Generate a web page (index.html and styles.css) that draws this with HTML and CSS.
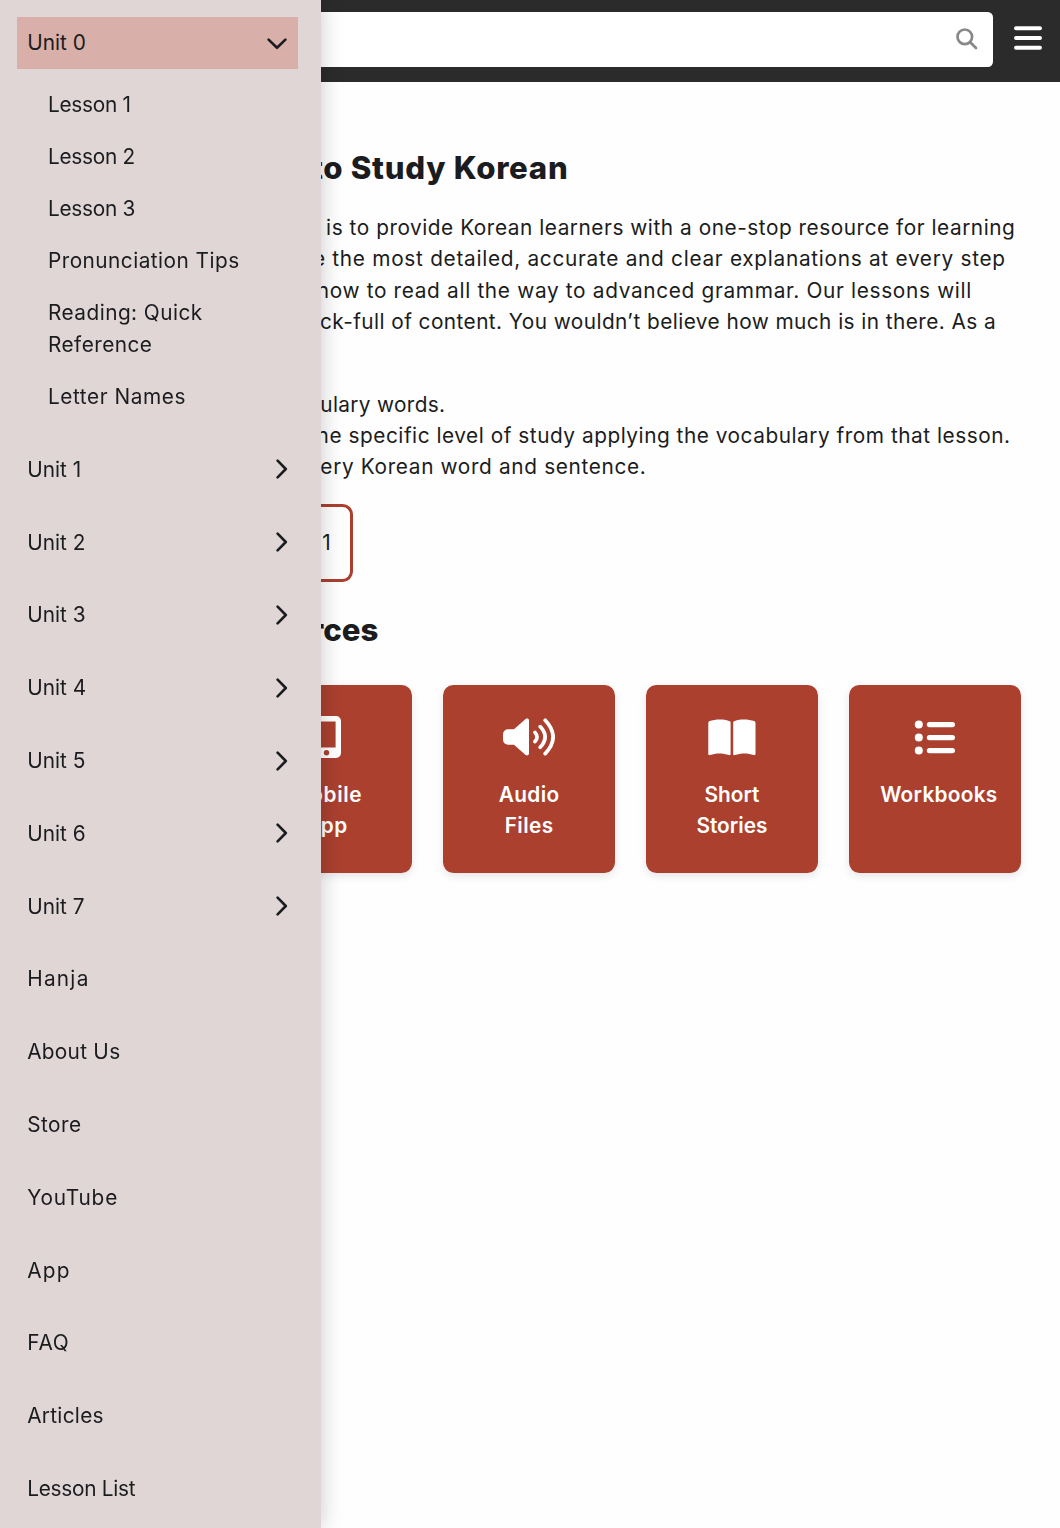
FILE: index.html
```html
<!DOCTYPE html>
<html lang="en">
<head>
<meta charset="utf-8">
<title>How to Study Korean</title>
<link rel="stylesheet" href="styles.css">
</head>
<body>
<header class="topbar">
  <div class="search">
    <svg class="search-icon" viewBox="0 0 22 22"><circle cx="8.8" cy="8.8" r="7.3"/><path d="M14.2 14.2 20 20"/></svg>
  </div>
  <svg class="burger" viewBox="0 0 28 26"><path d="M2 3.2H26M2 13H26M2 22.8H26"/></svg>
</header>

<main class="content">
  <h1 class="title title-main">Welcome to How to Study Korean</h1>
  <p class="text">
    <span class="line p1">Our goal here is to provide Korean learners with a one-stop resource for learning</span>
    <span class="line p2">Korean. We provide the most detailed, accurate and clear explanations at every step</span>
    <span class="line p3">from learning how to read all the way to advanced grammar. Our lessons will</span>
    <span class="line p4">be chock-full of content. You wouldn’t believe how much is in there. As a</span>
  </p>
  <div class="text list">
    <span class="line l1">Over 8,000 vocabulary words.</span>
    <span class="line l2">Sentences at the specific level of study applying the vocabulary from that lesson.</span>
    <span class="line l3">Audio for every Korean word and sentence.</span>
  </div>
  <a class="start">Start with Unit 1, Lesson 1</a>
  <h2 class="title title-sub">Resources</h2>
  <div class="cards">
    <a class="card"><span class="card-icon"><svg width="42" height="42" viewBox="0 0 42 42"><rect x="3" y="3" width="36" height="36" rx="3" fill="#fff"/></svg></span><span>Lessons</span></a>
    <a class="card"><span class="card-icon"><svg width="29" height="42" viewBox="0 0 29 42"><path fill="#fff" fill-rule="evenodd" d="M5 0H24A5 5 0 0 1 29 5V37A5 5 0 0 1 24 42H5A5 5 0 0 1 0 37V5A5 5 0 0 1 5 0ZM5.4 5.6V31.4H23.6V5.6ZM14.5 34A2.7 2.7 0 1 0 14.5 39.4A2.7 2.7 0 1 0 14.5 34Z"/></svg></span><span class="ls-mob">Mobile App</span></a>
    <a class="card"><span class="card-icon"><svg width="52" height="38" viewBox="0 0 52 38"><path fill="#fff" d="M5 11.2H11L22.6 1C24 .1 26 .6 26 2.4V35.6C26 37.4 24 37.9 22.6 37L11 26.7H5A5 5 0 0 1 0 21.7V16.2A5 5 0 0 1 5 11.2Z"/><path d="M32 14.4Q36 19 32 23.5M37.2 8.6Q47 19 37.2 29.2M42.2 2.3Q58 19 42.2 35.6" fill="none" stroke="#fff" stroke-width="3.7" stroke-linecap="round"/></svg></span><span class="ls-aud">Audio Files</span></a>
    <a class="card"><span class="card-icon"><svg width="48" height="37" viewBox="0 0 48 37"><path fill="#fff" d="M22.6 3.3V35C22.6 36.2 22 36.4 21 36C15 34 8 33.8 2 36C.9 36.4.3 36 .3 35V4Q.3 2.7 1.5 2.1C7 .1 15-.3 21 1.9Q22.6 2.4 22.6 3.3ZM25.2 3.3V35C25.2 36.2 25.8 36.4 26.8 36C32.8 34 39.8 33.8 45.8 36C46.9 36.4 47.5 36 47.5 35V4Q47.5 2.7 46.3 2.1C40.8.1 32.8-.3 26.8 1.9Q25.2 2.4 25.2 3.3Z"/></svg></span><span>Short Stories</span></a>
    <a class="card"><span class="card-icon"><svg width="41" height="35" viewBox="-.6 -.2 41 35"><g fill="#fff"><circle cx="4.2" cy="4.4" r="4"/><circle cx="4.2" cy="17.4" r="4"/><circle cx="4.2" cy="30.4" r="4"/></g><path d="M14.8 4.4H37.8M14.8 17.4H37.8M14.8 30.4H37.8" stroke="#fff" stroke-width="5.2" stroke-linecap="round"/></svg></span><span class="ls-wrk">Workbooks</span></a>
  </div>
</main>

<nav class="sidebar">
  <div class="unit active">Unit 0<svg class="chev-down" viewBox="0 0 20 12"><path d="M1.6 1.6 10 9.8 18.4 1.6"/></svg></div>
  <div class="lessons">
    <a class="lesson t0">Lesson 1</a>
    <a class="lesson t0">Lesson 2</a>
    <a class="lesson t0">Lesson 3</a>
    <a class="lesson t2">Pronunciation Tips</a>
    <a class="lesson t2">Reading: Quick Reference</a>
    <a class="lesson t3">Letter Names</a>
  </div>
  <div class="unit">Unit 1<svg class="chev" viewBox="0 0 12 20"><path d="M1.6 1.6 9.8 10 1.6 18.4"/></svg></div>
  <div class="unit">Unit 2<svg class="chev" viewBox="0 0 12 20"><path d="M1.6 1.6 9.8 10 1.6 18.4"/></svg></div>
  <div class="unit">Unit 3<svg class="chev" viewBox="0 0 12 20"><path d="M1.6 1.6 9.8 10 1.6 18.4"/></svg></div>
  <div class="unit">Unit 4<svg class="chev" viewBox="0 0 12 20"><path d="M1.6 1.6 9.8 10 1.6 18.4"/></svg></div>
  <div class="unit">Unit 5<svg class="chev" viewBox="0 0 12 20"><path d="M1.6 1.6 9.8 10 1.6 18.4"/></svg></div>
  <div class="unit">Unit 6<svg class="chev" viewBox="0 0 12 20"><path d="M1.6 1.6 9.8 10 1.6 18.4"/></svg></div>
  <div class="unit">Unit 7<svg class="chev" viewBox="0 0 12 20"><path d="M1.6 1.6 9.8 10 1.6 18.4"/></svg></div>
  <a class="unit t5">Hanja</a>
  <a class="unit t1">About Us</a>
  <a class="unit t2">Store</a>
  <a class="unit t4">YouTube</a>
  <a class="unit t5">App</a>
  <a class="unit t4">FAQ</a>
  <a class="unit t1">Articles</a>
  <a class="unit t0">Lesson List</a>
</nav>
</body>
</html>
```
FILE: styles.css
```css
* { box-sizing: border-box; }

html, body { height: 100%; }

body {
  margin: 0;
  overflow: hidden;
  background: #fefefe;
  color: #1b1c20;
  font: 400 20.8px/31.2px Inter, "Open Sans", sans-serif;
}

.topbar {
  display: flex;
  align-items: center;
  gap: 21px;
  height: 82.4px;
  padding: 0 18.4px 3.6px 40px;
  background: #2b2b2b;
}

.search {
  display: flex;
  flex: 1;
  align-items: center;
  justify-content: flex-end;
  height: 55.4px;
  padding-right: 15px;
  border-radius: 5.2px;
  background: #fff;
}

.search-icon {
  width: 22px;
  height: 22px;
  fill: none;
  stroke: #888;
  stroke-width: 2.7;
  stroke-linecap: round;
}

.burger {
  width: 28px;
  height: 26px;
  margin-top: -2px;
  stroke: #fff;
  stroke-width: 4;
  stroke-linecap: round;
}

.content { padding: 66px 39.6px 0 37.8px; }

.title {
  display: flex;
  justify-content: flex-end;
  margin: 0;
  font-size: 31.2px;
  font-weight: 800;
  line-height: 41.6px;
  white-space: nowrap;
}

.title-main { padding-right: 452px; letter-spacing: .7px; }
.title-sub { margin-top: 28px; padding-right: 642px; }

.text { margin: 22.3px 0 0; }
.list { margin-top: 51.8px; }

.line {
  display: flex;
  justify-content: flex-end;
  white-space: nowrap;
}

.p1 { padding-right: 5px; letter-spacing: .54px; }
.p2 { padding-right: 14.6px; letter-spacing: .71px; }
.p3 { padding-right: 48.4px; letter-spacing: .68px; }
.p4 { padding-right: 24.3px; letter-spacing: .435px; }
.l1 { padding-right: 575px; letter-spacing: .338px; }
.l2 { padding-right: 9.8px; letter-spacing: .53px; }
.l3 { padding-right: 374px; letter-spacing: .65px; }

.start {
  display: flex;
  align-items: center;
  justify-content: flex-end;
  width: 315.4px;
  height: 78px;
  margin-top: 21px;
  padding-right: 19.4px;
  border: 3px solid #ab402f;
  border-radius: 10.4px;
  white-space: nowrap;
}

.cards {
  display: grid;
  grid-template-columns: repeat(5, 171.6px);
  gap: 31.2px;
  margin-top: 34.3px;
}

.card {
  display: flex;
  flex-direction: column;
  align-items: center;
  gap: 20.8px;
  height: 187.2px;
  padding: 31.2px;
  border-radius: 10.4px;
  background: #ab402f;
  box-shadow: 0 3px 8px rgba(0, 0, 0, .1);
  color: #fff;
  font-weight: 600;
  text-align: center;
}

.card > span:last-child { width: 109.2px; }

.card-icon {
  display: flex;
  align-items: center;
  justify-content: center;
  height: 41.6px;
}

.ls-mob { letter-spacing: .6px; }
.ls-aud { letter-spacing: .4px; }
.ls-wrk { letter-spacing: .28px; }

/* Slide-out menu, drawn over the page */
.sidebar {
  position: fixed;
  top: 0;
  bottom: 0;
  left: 0;
  display: flex;
  flex-direction: column;
  gap: 20.8px;
  width: 321px;
  padding: 16.8px 23.4px 0 16.8px;
  background: #e0d6d5;
  box-shadow: 0 0 21px rgba(0, 0, 0, .21);
}

.unit {
  display: flex;
  flex: none;
  align-items: center;
  justify-content: space-between;
  height: 52px;
  padding: 0 10.4px;
}

.active { background: #d8b0a9; }

.lessons {
  display: flex;
  flex-direction: column;
  margin-top: -11px;
}

.lesson { padding: 10.3px 35px 10.3px 31.2px; line-height: 31.5px; }

.chev, .chev-down {
  fill: none;
  stroke: #1b1c20;
  stroke-width: 2.6;
  stroke-linecap: round;
  stroke-linejoin: round;
}

.chev { width: 12px; height: 20px; margin-right: -1px; }
.chev-down { width: 20px; height: 12px; margin-top: 3px; }

.t0 { letter-spacing: -.26px; }
.t1 { letter-spacing: .28px; }
.t2 { letter-spacing: .46px; }
.t3 { letter-spacing: .56px; }
.t4 { letter-spacing: .8px; }
.t5 { letter-spacing: 1.25px; }
```
